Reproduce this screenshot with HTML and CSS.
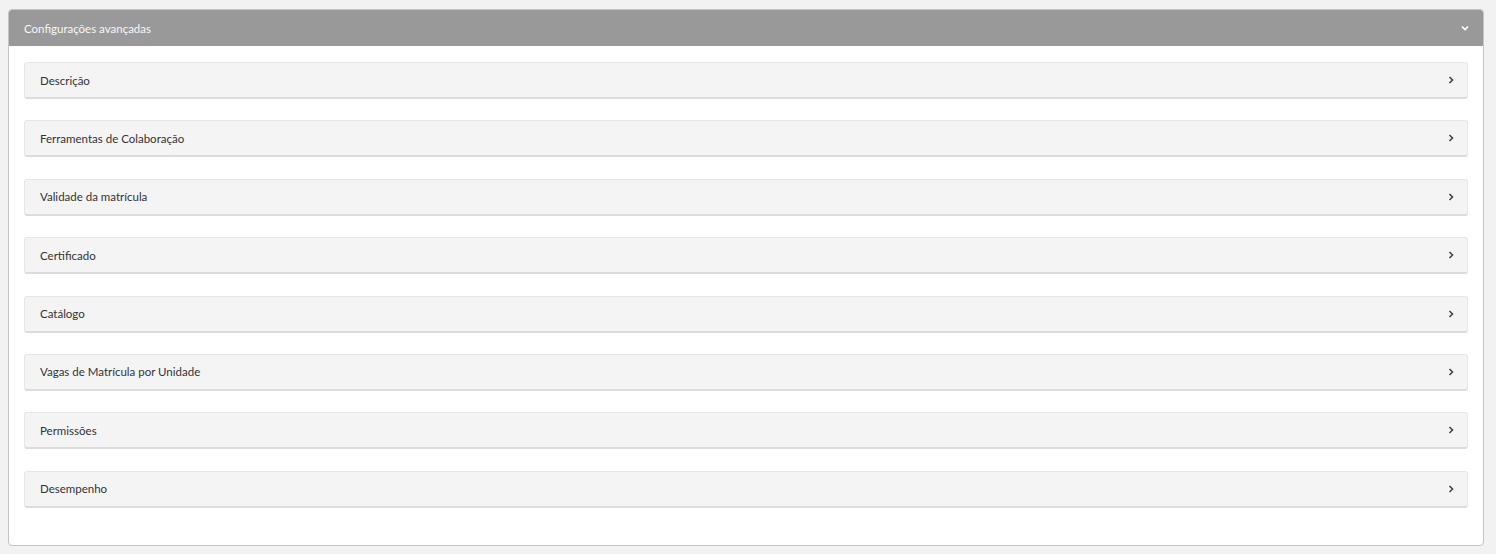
FILE: index.html
```html
<!DOCTYPE html>
<html>
<head>
    <title>Configurações avançadas</title>
    <meta name="viewport" content="width=device-width, initial-scale=1.0">
    <link rel="stylesheet" href="styles.css">
</head>
<body>
    <div class="panel">
        <div class="panel-header">
            <span>Configurações avançadas</span>
            <svg class="chevron" width="10" height="10" viewBox="0 0 10 10"><path d="M2 3.5 L5 6.5 L8 3.5" fill="none" stroke="#fff" stroke-width="1.6"/></svg>
        </div>
        <div class="panel-body">
            <div class="section"><span>Descrição</span><svg class="arrow" width="10" height="10" viewBox="0 0 10 10"><path d="M3.5 2 L6.5 5 L3.5 8" fill="none" stroke="#444" stroke-width="1.6"/></svg></div>
            <div class="section"><span>Ferramentas de Colaboração</span><svg class="arrow" width="10" height="10" viewBox="0 0 10 10"><path d="M3.5 2 L6.5 5 L3.5 8" fill="none" stroke="#444" stroke-width="1.6"/></svg></div>
            <div class="section"><span>Validade da matrícula</span><svg class="arrow" width="10" height="10" viewBox="0 0 10 10"><path d="M3.5 2 L6.5 5 L3.5 8" fill="none" stroke="#444" stroke-width="1.6"/></svg></div>
            <div class="section"><span>Certificado</span><svg class="arrow" width="10" height="10" viewBox="0 0 10 10"><path d="M3.5 2 L6.5 5 L3.5 8" fill="none" stroke="#444" stroke-width="1.6"/></svg></div>
            <div class="section"><span>Catálogo</span><svg class="arrow" width="10" height="10" viewBox="0 0 10 10"><path d="M3.5 2 L6.5 5 L3.5 8" fill="none" stroke="#444" stroke-width="1.6"/></svg></div>
            <div class="section"><span>Vagas de Matrícula por Unidade</span><svg class="arrow" width="10" height="10" viewBox="0 0 10 10"><path d="M3.5 2 L6.5 5 L3.5 8" fill="none" stroke="#444" stroke-width="1.6"/></svg></div>
            <div class="section"><span>Permissões</span><svg class="arrow" width="10" height="10" viewBox="0 0 10 10"><path d="M3.5 2 L6.5 5 L3.5 8" fill="none" stroke="#444" stroke-width="1.6"/></svg></div>
            <div class="section"><span>Desempenho</span><svg class="arrow" width="10" height="10" viewBox="0 0 10 10"><path d="M3.5 2 L6.5 5 L3.5 8" fill="none" stroke="#444" stroke-width="1.6"/></svg></div>
        </div>
    </div>
</body>
</html>
```

FILE: styles.css
```css
body { font-family: Lato, "Open Sans", sans-serif; margin: 0; padding: 9px 12px 9px 8px; background-color: #f2f2f2; font-size: 11.5px; }
.panel { background-color: #fff; border: 1px solid #c4c4c4; border-radius: 4px; overflow: hidden; }
.panel-header { background-color: #999; color: #f7f7f7; height: 36px; display: flex; align-items: center; justify-content: space-between; padding: 0 13px 0 15px; }
.panel-body { padding: 16px 15px 37px 15px; display: flex; flex-direction: column; gap: 21.4px; }
.section { background-color: #f4f4f4; border: 1px solid #e6e6e6; border-bottom: 2px solid #dcdcdc; border-radius: 3px; height: 34px; display: flex; align-items: center; justify-content: space-between; padding: 0 11px 0 15px; color: #333; }
.chevron, .arrow { display: block; }
```
